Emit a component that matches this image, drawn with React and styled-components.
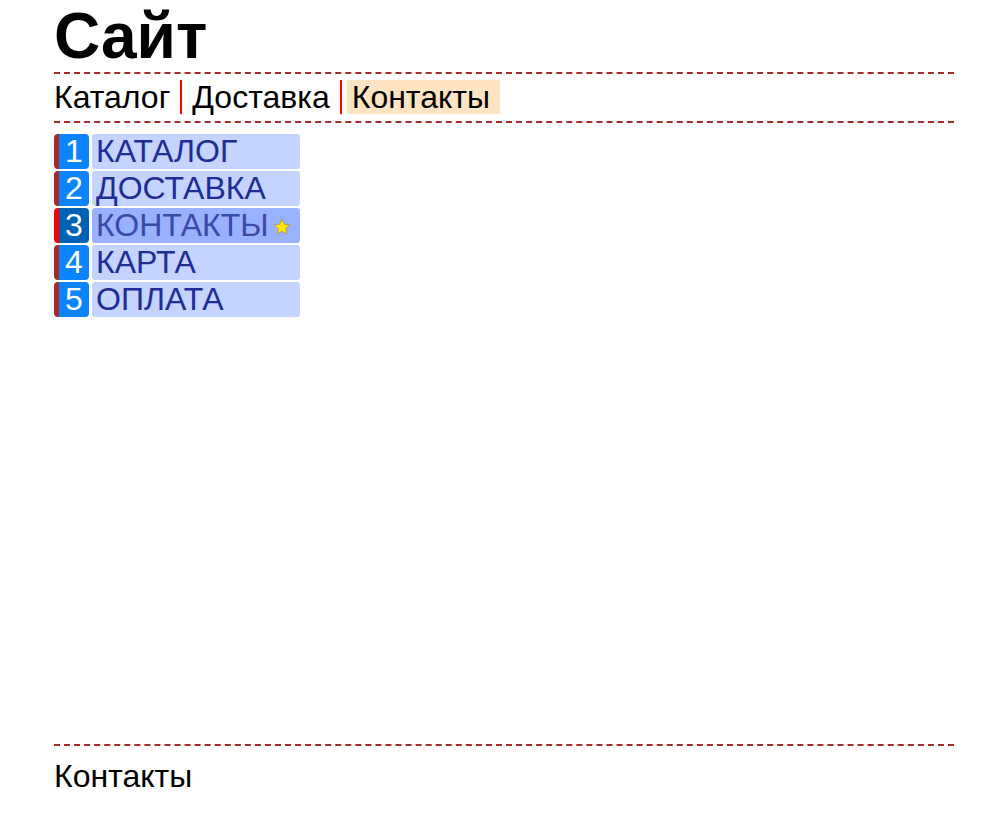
import React from "react";
import styled, { createGlobalStyle } from "styled-components";

const GlobalStyle = createGlobalStyle`
    html, body {
        margin: 0;
        padding: 0;
        background: #ffffff;
    }
    body {
        font-family: "Liberation Sans", Arial, sans-serif;
        color: #000000;
    }
`;

const navItems = [
    { id: "catalog", title: "Каталог" },
    { id: "delivery", title: "Доставка" },
    { id: "contacts", title: "Контакты", active: true },
];

const menuItems = [
    { num: 1, title: "КАТАЛОГ" },
    { num: 2, title: "ДОСТАВКА" },
    { num: 3, title: "КОНТАКТЫ", active: true },
    { num: 4, title: "КАРТА" },
    { num: 5, title: "ОПЛАТА" },
];

const Star = () => (
    <StarIcon viewBox="0 0 24 24">
        <path
            d="M12 2.5l2.9 6.1 6.6.8-4.9 4.6 1.3 6.6L12 17.3l-5.9 3.3 1.3-6.6-4.9-4.6 6.6-.8z"
            fill="#ffe600"
            stroke="#a89a70"
            strokeWidth="1.2"
            strokeLinejoin="round"
        />
    </StarIcon>
);

const App = () => {
    return (
        <>
            <GlobalStyle />
            <Page>
                <Title>Сайт</Title>

                <Nav>
                    {navItems.map((item, i) => (
                        <NavItem key={item.id} first={i === 0}>
                            <NavLink first={i === 0} active={item.active}>
                                {item.title}
                            </NavLink>
                        </NavItem>
                    ))}
                </Nav>

                <Main>
                    <Menu>
                        {menuItems.map((item) => (
                            <MenuRow key={item.num}>
                                <MenuNumber active={item.active}>
                                    {item.num}
                                </MenuNumber>
                                <MenuLabel active={item.active}>
                                    {item.title}
                                    {item.active && <Star />}
                                </MenuLabel>
                            </MenuRow>
                        ))}
                    </Menu>
                </Main>

                <Footer>Контакты</Footer>
            </Page>
        </>
    );
};

// Styled Components
const Page = styled.div`
    width: 900px;
    margin-left: 54px;
    min-height: 100vh;
    display: flex;
    flex-direction: column;
`;

const Title = styled.h1`
    margin: 0;
    font-size: 64px;
    font-weight: 700;
    line-height: 72px;
    border-bottom: 2px dashed #a52a2a;
`;

const Nav = styled.ul`
    list-style: none;
    margin: 0;
    padding: 6px 0 7px;
    display: flex;
    border-bottom: 2px dashed #a52a2a;
`;

const NavItem = styled.li`
    display: flex;
    padding-left: ${(props) => (props.first ? "0" : "5px")};
    border-left: ${(props) => (props.first ? "none" : "2px solid #ff0000")};
`;

const NavLink = styled.span`
    font-size: 32px;
    line-height: 34px;
    padding: 0 10px 0 ${(props) => (props.first ? "0" : "5px")};
    background: ${(props) => (props.active ? "#ffe4c4" : "transparent")};
    cursor: pointer;
`;

const Main = styled.main`
    flex: 1;
    padding-top: 11px;
`;

const Menu = styled.ul`
    list-style: none;
    margin: 0;
    padding: 0;
    width: 246px;
    display: flex;
    flex-direction: column;
    gap: 2px;
`;

const MenuRow = styled.li`
    display: flex;
    gap: 3px;
    height: 35px;
`;

const MenuNumber = styled.div`
    width: 30px;
    border-left: 5px solid
        ${(props) => (props.active ? "#ff0000" : "#a52a2a")};
    border-radius: 4px;
    background: ${(props) => (props.active ? "#0062b4" : "#0a84ff")};
    color: #ffffff;
    font-size: 32px;
    line-height: 35px;
    text-align: center;
`;

const MenuLabel = styled.div`
    flex: 1;
    display: flex;
    align-items: center;
    gap: 3px;
    padding-left: 4px;
    border-radius: 3px;
    background: ${(props) => (props.active ? "#99b2ff" : "#c4d3ff")};
    color: ${(props) => (props.active ? "#3a4aa8" : "#1e2c95")};
    font-size: 32px;
    line-height: 35px;
    cursor: pointer;
`;

const StarIcon = styled.svg`
    width: 20px;
    height: 20px;
    margin-top: 3px;
`;

const Footer = styled.footer`
    border-top: 2px dashed #a52a2a;
    padding: 13px 0 22px;
    font-size: 32px;
    line-height: 34px;
`;

export default App;
